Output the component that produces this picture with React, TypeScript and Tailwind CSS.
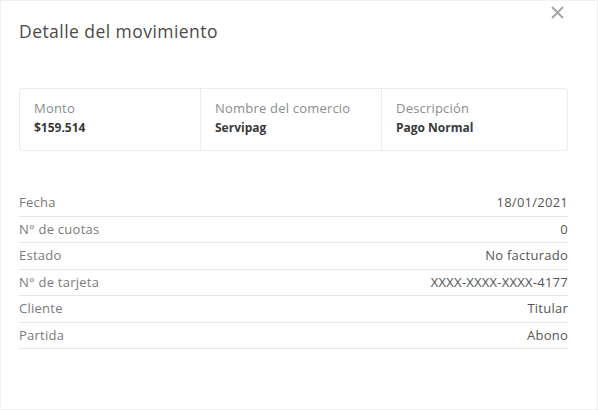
import React from 'react';

type Detail = { label: string; value: string };

const summary: Detail[] = [
  { label: 'Monto', value: '$159.514' },
  { label: 'Nombre del comercio', value: 'Servipag' },
  { label: 'Descripción', value: 'Pago Normal' },
];

const rows: Detail[] = [
  { label: 'Fecha', value: '18/01/2021' },
  { label: 'N° de cuotas', value: '0' },
  { label: 'Estado', value: 'No facturado' },
  { label: 'N° de tarjeta', value: 'XXXX-XXXX-XXXX-4177' },
  { label: 'Cliente', value: 'Titular' },
  { label: 'Partida', value: 'Abono' },
];

const App: React.FC = () => {
  return (
    <div
      className="w-[598px] h-[410px] bg-white border border-[#f0f0f0] box-border relative pl-[18px]"
      style={{ fontFamily: '"Open Sans", "Liberation Sans", sans-serif' }}
    >
      {/* close button */}
      <button className="absolute right-[33px] top-[5px]">
        <svg width="13" height="13" viewBox="0 0 13 13">
          <path d="M1 1 L12 12 M12 1 L1 12" stroke="#a3a3a3" strokeWidth="1.8" />
        </svg>
      </button>

      <div className="w-[549px]">
        <h2 className="pt-[18px] text-[17.5px] leading-[24px] tracking-[0.45px] text-[#4a4a4a]">
          Detalle del movimiento
        </h2>

        {/* summary card */}
        <div className="mt-[45px] grid grid-cols-[180px_181px_1fr] border border-[#ececec] rounded-[3px] h-[63px]">
          {summary.map((item, i) => (
            <div
              key={item.label}
              className={`pl-[14px] pt-[9px] ${i > 0 ? 'border-l border-[#ececec]' : ''}`}
            >
              <div className="text-[13px] leading-[20px] tracking-[0.2px] text-[#8c8c8c]">{item.label}</div>
              <div className="text-[12px] leading-[20px] font-bold text-[#3a3a3a]">{item.value}</div>
            </div>
          ))}
        </div>

        {/* detail rows */}
        <div className="mt-[39px]">
          {rows.map((row) => (
            <div
              key={row.label}
              className="flex justify-between items-center h-[26.5px] border-b border-[#e6e6e6] text-[13px] tracking-[0.25px] text-[#7a7a7a]"
            >
              <span>{row.label}</span>
              <span className="text-[#555]">{row.value}</span>
            </div>
          ))}
        </div>
      </div>
    </div>
  );
};

export default App;
